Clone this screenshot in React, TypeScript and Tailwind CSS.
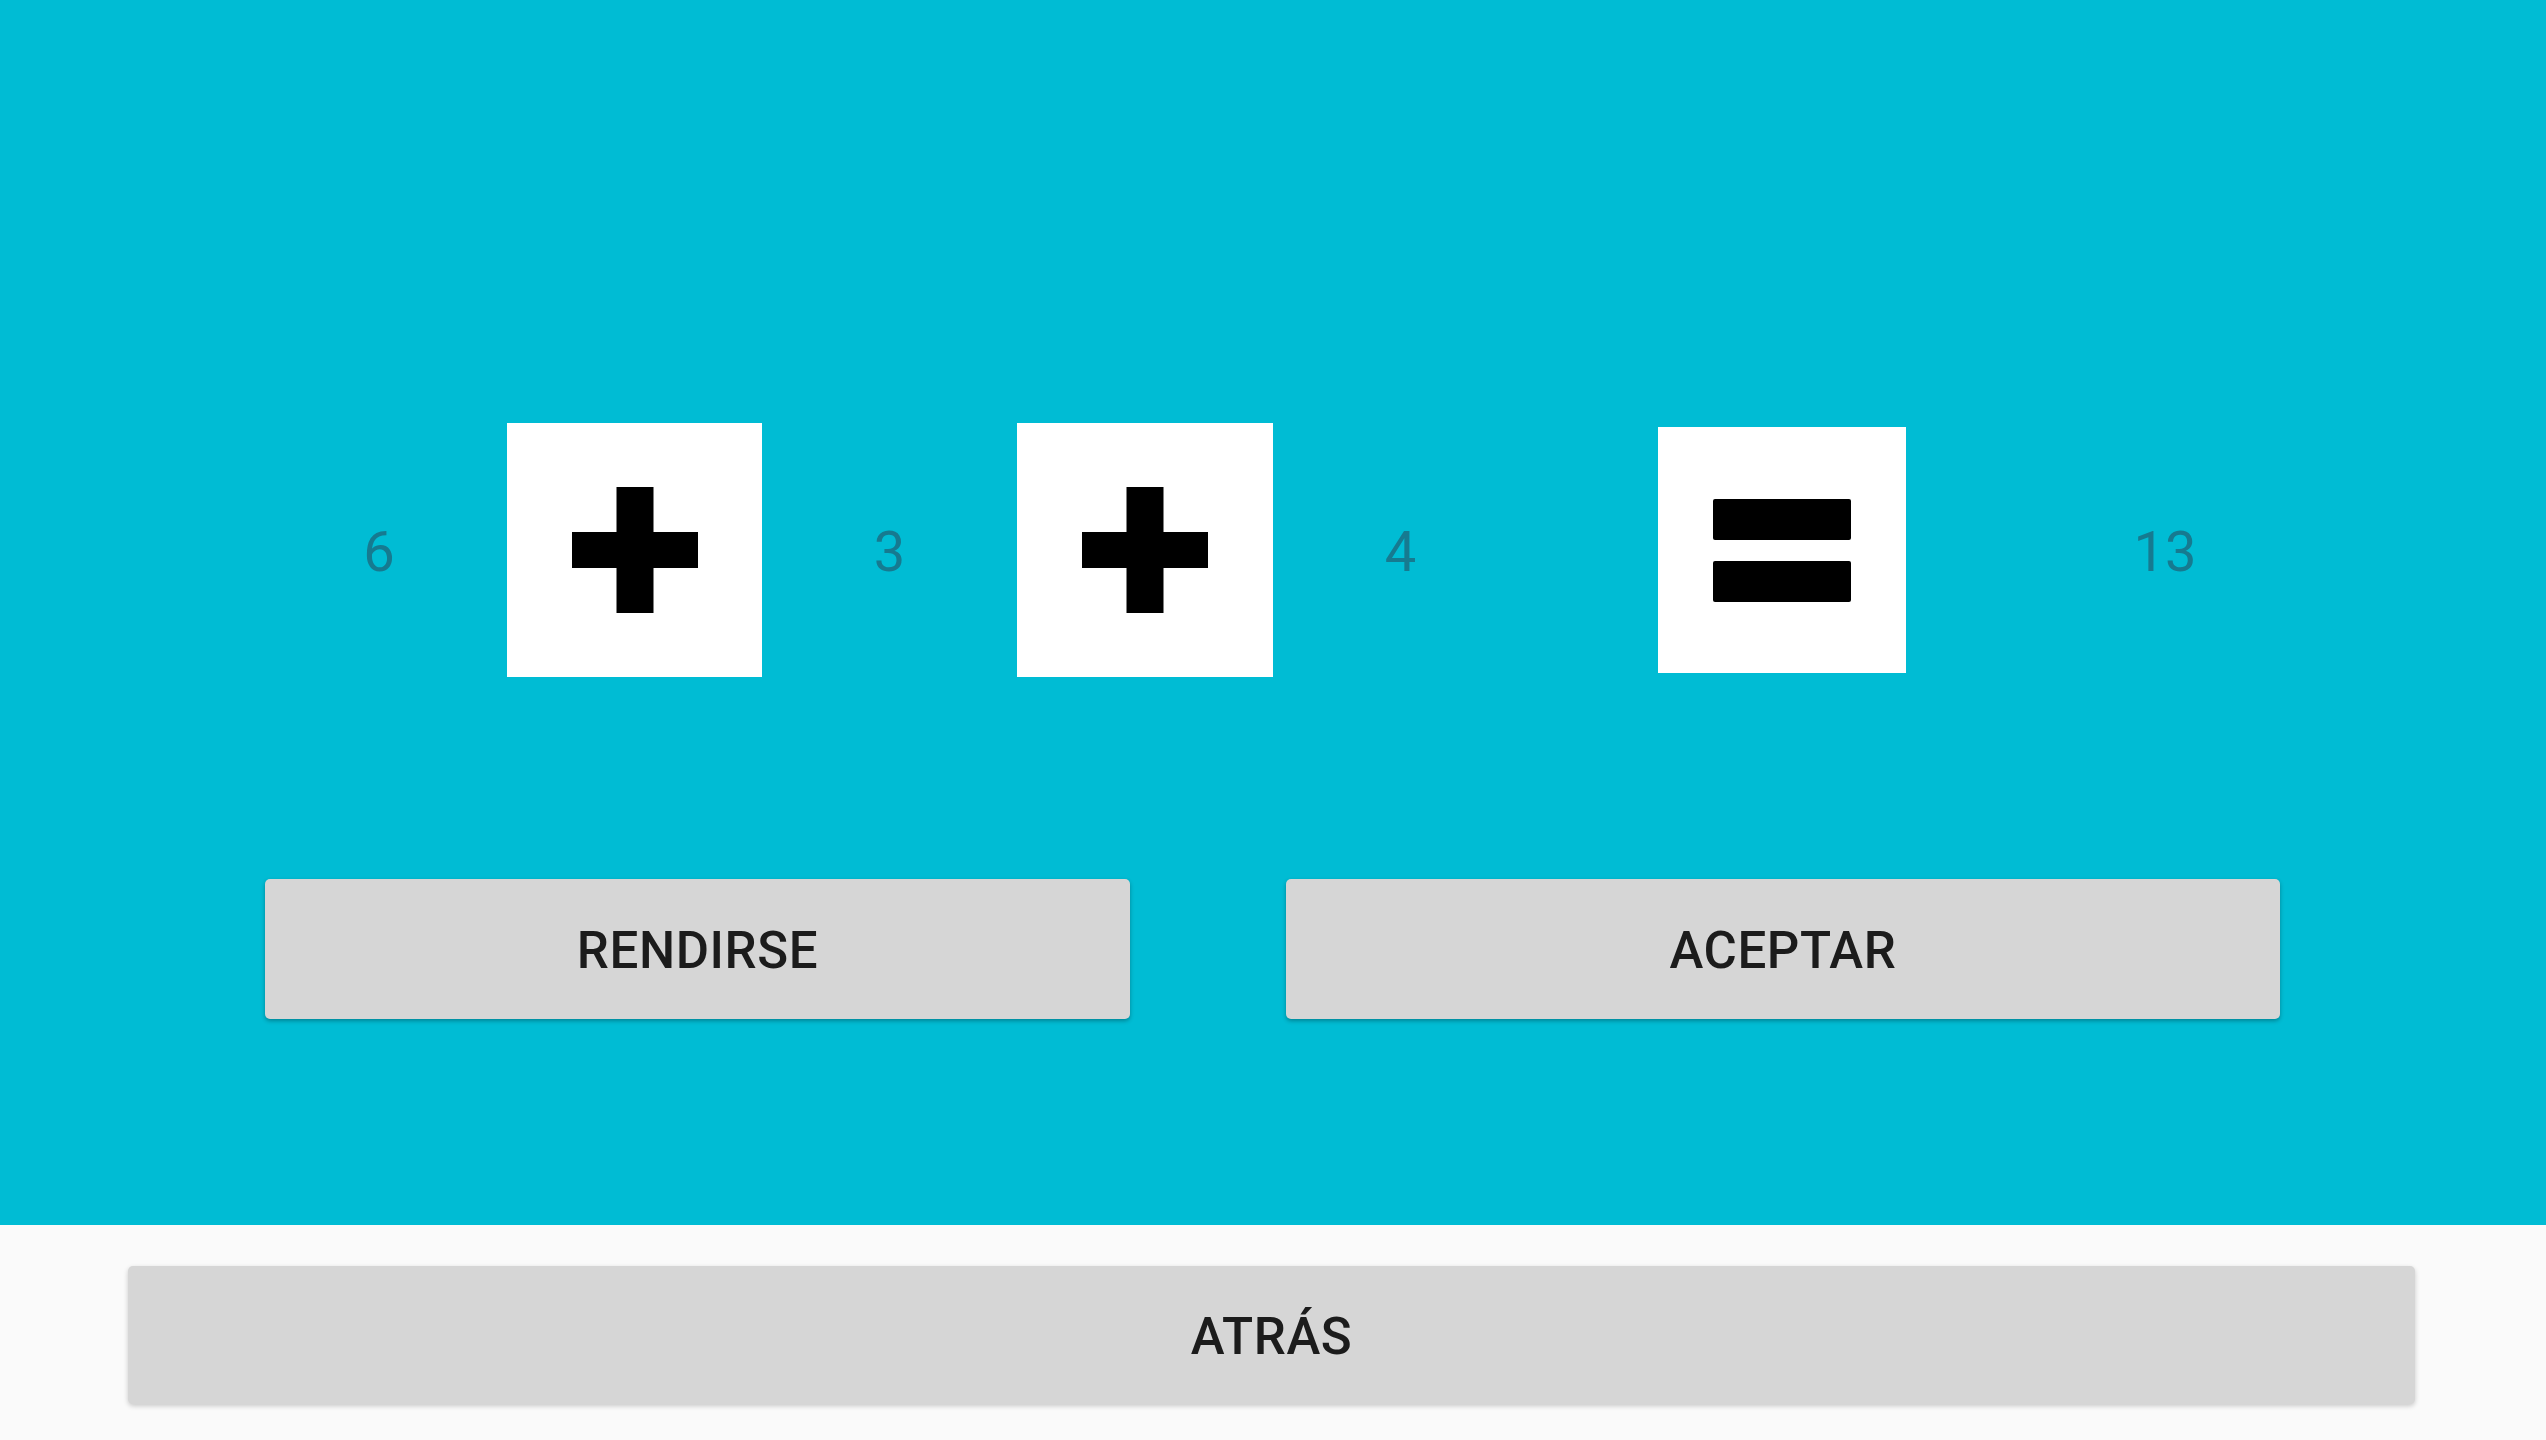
// Juego de operaciones: pantalla de adivinar operadores
const FONT = "font-['Roboto','Liberation_Sans',sans-serif]";

function PlusIcon() {
  return (
    <svg width="126" height="126" viewBox="0 0 126 126">
      <rect x="44.5" y="0" width="37" height="126" fill="#000" />
      <rect x="0" y="45" width="126" height="36" fill="#000" />
    </svg>
  );
}

function EqualsIcon() {
  return (
    <svg width="138" height="103" viewBox="0 0 138 103">
      <rect x="0" y="0" width="138" height="41" rx="2" fill="#000" />
      <rect x="0" y="62" width="138" height="41" rx="2" fill="#000" />
    </svg>
  );
}

function Num({ value, width }: { value: string; width: string }) {
  return (
    <div className={`${width} text-center text-[56px] leading-none text-[#167a90] mt-[4px]`}>
      {value}
    </div>
  );
}

export default function App() {
  return (
    <div className={`w-[2546px] h-[1440px] flex flex-col bg-[#fafafa] ${FONT}`}>
      <div className="h-[1225px] bg-[#00bcd4] flex flex-col pt-[423px]">
        {/* fila de la operación */}
        <div className="flex items-center pl-[251px]">
          <Num value="6" width="w-[256px]" />
          <div className="w-[255px] h-[254px] bg-white flex items-center justify-center">
            <PlusIcon />
          </div>
          <Num value="3" width="w-[255px]" />
          <div className="w-[256px] h-[254px] bg-white flex items-center justify-center">
            <PlusIcon />
          </div>
          <Num value="4" width="w-[255px]" />
          <div className="ml-[130px] w-[248px] h-[246px] bg-white flex items-center justify-center">
            <EqualsIcon />
          </div>
          <Num value="13" width="w-[518px]" />
        </div>

        {/* botones */}
        <div className="flex mt-[202px] pl-[265px] gap-[156px]">
          <button className="w-[865px] h-[140px] pt-[5px] bg-[#d6d6d6] rounded-[5px] shadow-[0_2px_4px_rgba(0,0,0,0.3)] text-[51px] font-medium text-[#1c1c1c] tracking-[0.6px]">
            RENDIRSE
          </button>
          <button className="w-[994px] h-[140px] pt-[5px] bg-[#d6d6d6] rounded-[5px] shadow-[0_2px_4px_rgba(0,0,0,0.3)] text-[51px] font-medium text-[#1c1c1c] tracking-[0.6px]">
            ACEPTAR
          </button>
        </div>
      </div>

      <div className="flex pt-[41px] pl-[128px] pr-[131px]">
        <button className="flex-1 h-[138px] pt-[4px] bg-[#d6d6d6] rounded-[5px] shadow-[0_2px_5px_rgba(0,0,0,0.2)] text-[51px] font-medium text-[#1c1c1c] tracking-[0.6px]">
          ATRÁS
        </button>
      </div>
    </div>
  );
}
